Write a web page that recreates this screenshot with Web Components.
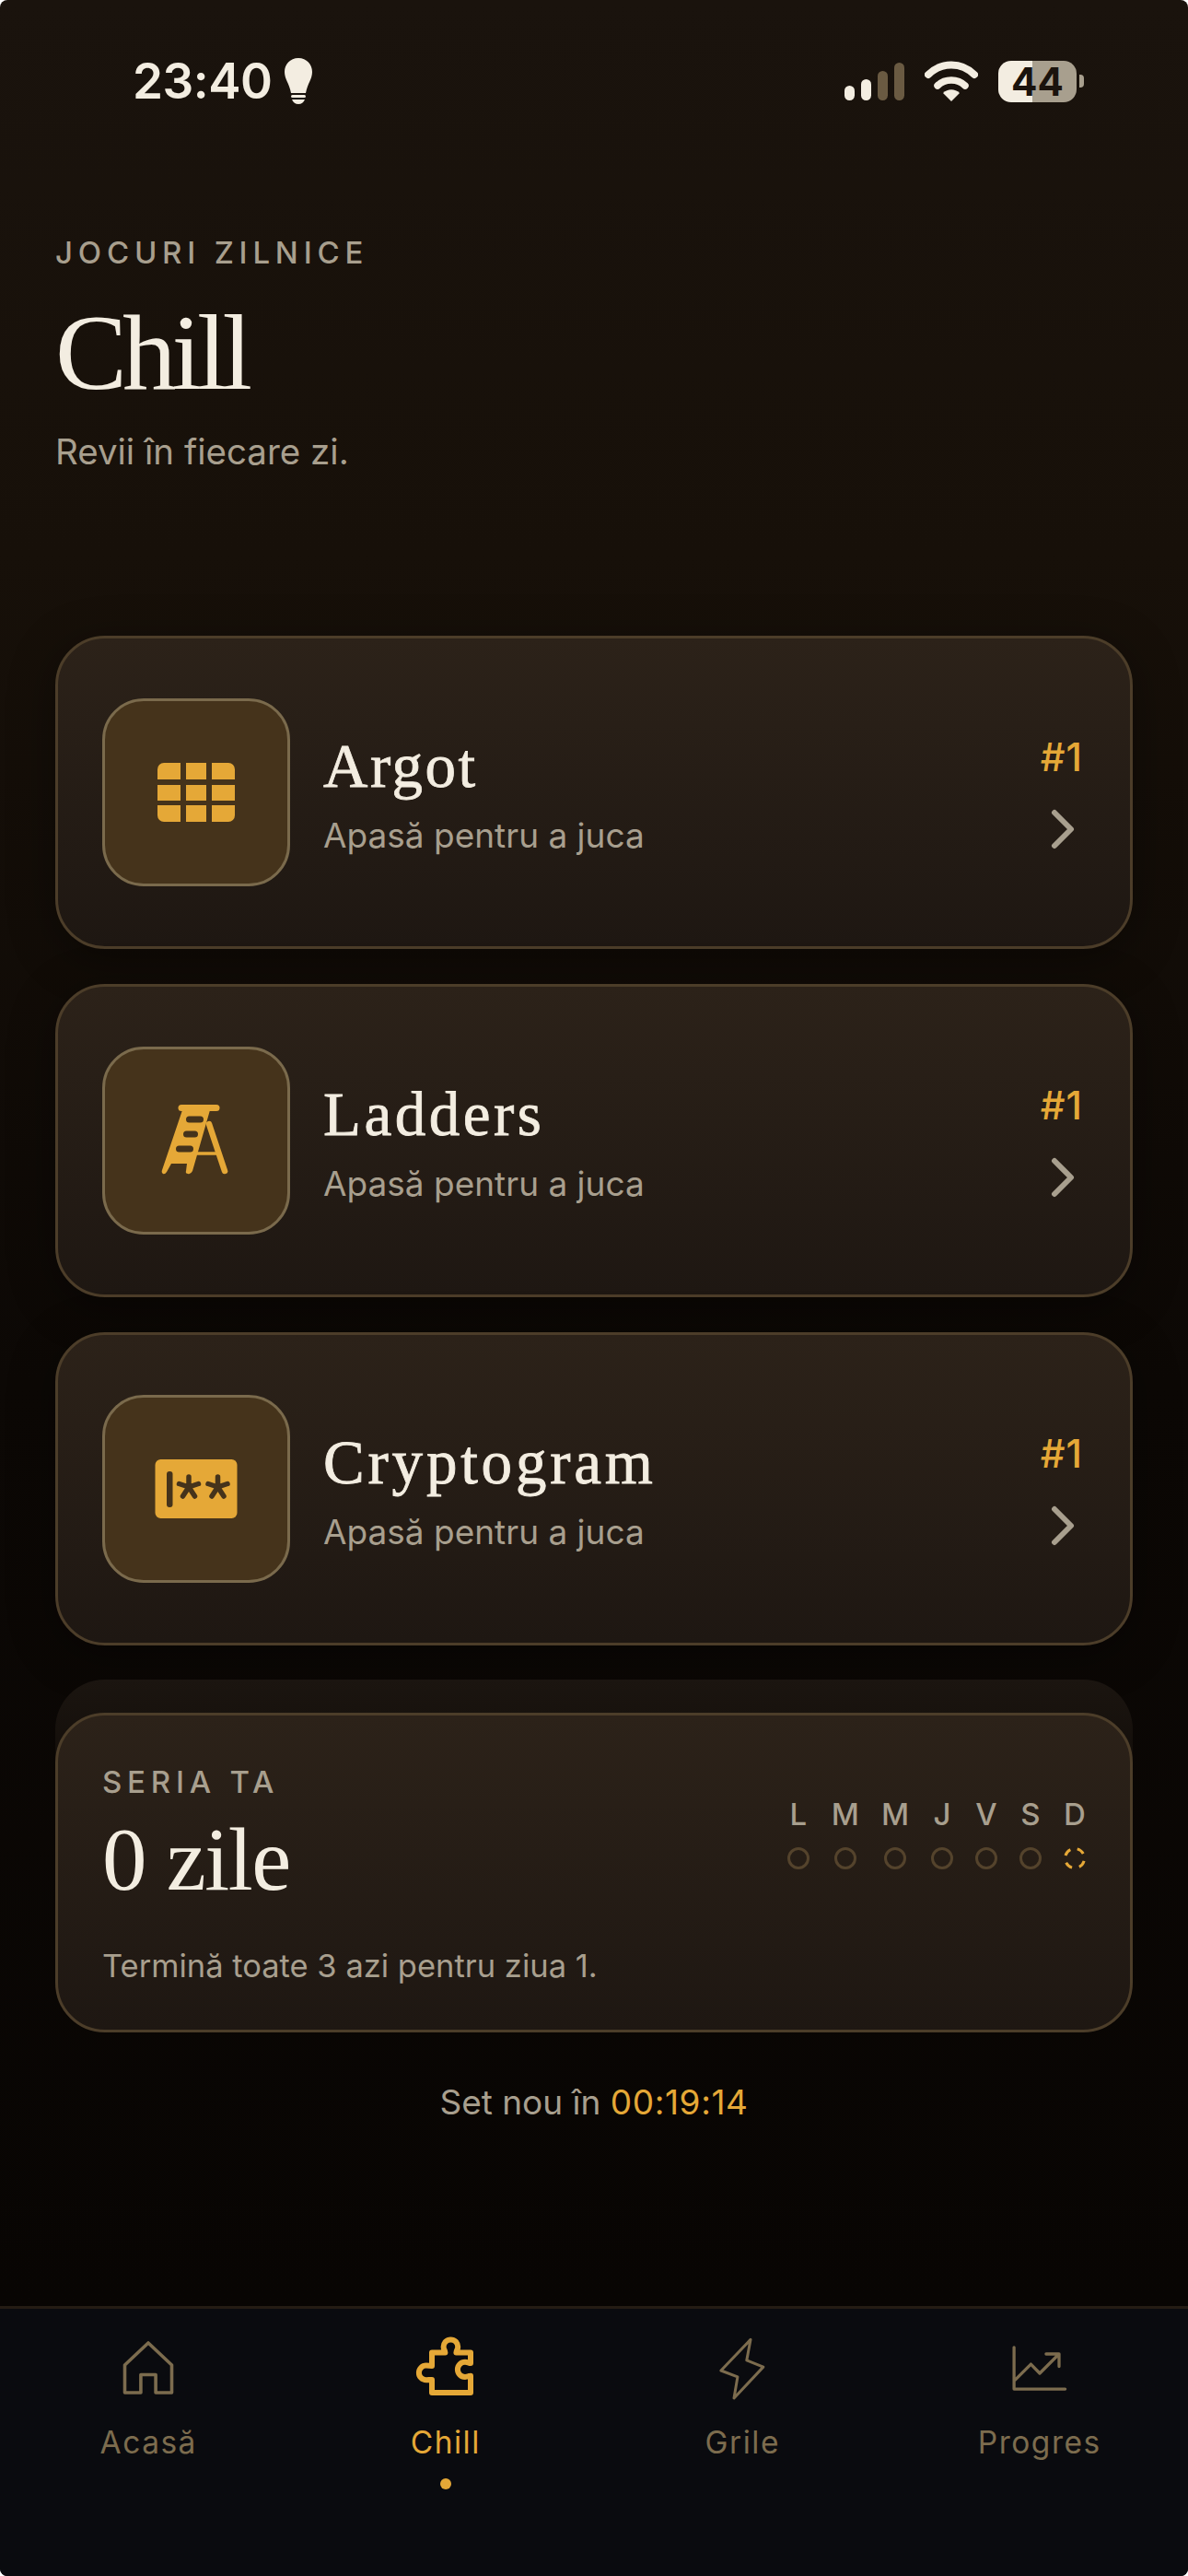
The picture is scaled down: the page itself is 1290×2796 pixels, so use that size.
<!DOCTYPE html>
<html lang="ro">
<head>
<meta charset="utf-8">
<title>Chill</title>
<style>
  html, body { margin: 0; background: #fff; }
  body { font-family: Inter, "Liberation Sans", sans-serif; }
</style>
</head>
<body>
<chill-app>
  <status-bar></status-bar>
  <page-header></page-header>
  <game-list>
    <game-card>
      <svg slot="icon" width="90" height="90" viewBox="0 0 90 90" fill="#e5a837">
        <clipPath id="grid-corners"><rect x="3" y="13" width="84" height="64" rx="7"/></clipPath>
        <g clip-path="url(#grid-corners)">
          <rect x="3" y="13" width="25" height="18"/><rect x="34" y="13" width="22" height="18"/><rect x="62" y="13" width="25" height="18"/>
          <rect x="3" y="37" width="25" height="17"/><rect x="34" y="37" width="22" height="17"/><rect x="62" y="37" width="25" height="17"/>
          <rect x="3" y="59" width="25" height="18"/><rect x="34" y="59" width="22" height="18"/><rect x="62" y="59" width="25" height="18"/>
        </g>
      </svg>
      <span slot="title" style="letter-spacing: 2.5px">Argot</span>
    </game-card>
    <game-card>
      <svg slot="icon" width="90" height="90" viewBox="0 3 90 90" fill="#e5a837">
        <rect x="25.5" y="9" width="45" height="7" rx="3.5"/>
        <path d="M30 15 H60 L41 81 Q39 85 36 84 Q33 84 34 81 L35 73 H18 L13 82 Q11 85 9 84 Q7 83 8 80 Z"/>
        <path d="M59 30 L76 81" stroke="#e5a837" stroke-width="6.5" stroke-linecap="round" fill="none"/>
        <path d="M44 62 H70" stroke="#e5a837" stroke-width="3.5" fill="none"/>
        <g fill="#45331b">
          <rect x="34" y="21.5" width="19" height="7" rx="3.5"/>
          <rect x="31" y="37.5" width="16" height="7" rx="3.5"/>
          <rect x="23" y="53.5" width="19" height="7" rx="3.5"/>
        </g>
      </svg>
      <span slot="title">Ladders</span>
    </game-card>
    <game-card>
      <svg slot="icon" width="90" height="90" viewBox="0 0 90 90">
        <rect x="0.5" y="13" width="89" height="64" rx="6" fill="#e5a837"/>
        <rect x="13" y="26" width="6.5" height="39" rx="3" fill="#45331b"/>
        <g stroke="#45331b" stroke-width="5.5" stroke-linecap="round">
          <path d="M37 32 V43 M37 43 L47.5 39.5 M37 43 L30.5 53 M37 43 L43.5 53 M37 43 L26.5 39.5"/>
          <path d="M68.5 32 V43 M68.5 43 L79 39.5 M68.5 43 L62 53 M68.5 43 L75 53 M68.5 43 L58 39.5"/>
        </g>
      </svg>
      <span slot="title" style="letter-spacing: 3.8px">Cryptogram</span>
    </game-card>
  </game-list>
  <streak-card></streak-card>
  <reset-timer></reset-timer>
  <tab-bar>
    <tab-item label="Acasă">
      <svg width="72" height="72" viewBox="0 0 24 24" fill="none" stroke="currentColor" stroke-width="1.2" stroke-linejoin="round"><path d="M12 3 L3.500 11 V21 H9.300 V14.500 H14.700 V21 H20.500 V11 Z"/></svg>
    </tab-item>
    <tab-item label="Chill" active>
      <svg width="72" height="72" viewBox="0 0 24 24" fill="none" stroke="currentColor" stroke-width="2" stroke-linejoin="round"><path d="M7 6.500 H11.800 C11.800 5.600 11.200 5.400 11.200 4.400 A2.600 2.600 0 0 1 16.400 4.400 C16.400 5.400 15.800 5.600 15.800 6.500 H21 V10.300 C20.200 10.300 20 9.900 19 9.900 A2.700 2.700 0 0 0 19 15.300 C20 15.300 20.200 14.900 21 14.900 V21 H7 V16.300 C6.200 16.300 5.800 16.400 4.900 16.400 A2.600 2.600 0 0 1 4.900 11.200 C5.800 11.200 6.200 11.300 7 11.300 Z"/></svg>
    </tab-item>
    <tab-item label="Grile">
      <svg width="72" height="72" viewBox="0 0 24 24" fill="none" stroke="currentColor" stroke-width="1" stroke-linejoin="round"><path d="M15 1.800 L13.600 9.300 L19.600 11.700 L9 23 L10.300 15.300 L4.300 13 Z"/></svg>
    </tab-item>
    <tab-item label="Progres">
      <svg width="72" height="72" viewBox="0 0 24 24" fill="none" stroke="currentColor" stroke-width="1.100" stroke-linecap="round" stroke-linejoin="round"><path d="M2.700 4.600 V19.700 H21.200 M3.200 16.300 L8.800 10.700 L12 14 L19 7 M14.300 7 H19 V11.500"/></svg>
    </tab-item>
  </tab-bar>
</chill-app>

<script>
  const amber = '#e5a837';
  const cream = '#f3ede1';
  const muted = '#a89f8e';

  class ChillApp extends HTMLElement {
    connectedCallback() {
      this.attachShadow({ mode: 'open' }).innerHTML = `
        <style>
          :host {
            display: flex;
            flex-direction: column;
            height: 2796px;
            box-sizing: border-box;
            border-radius: 8px;
            overflow: hidden;
            background: linear-gradient(#1a130d 0, #171009 600px, #0c0805 1500px, #080503 2500px);
          }
        </style>
        <slot></slot>`;
    }
  }

  class StatusBar extends HTMLElement {
    connectedCallback() {
      this.attachShadow({ mode: 'open' }).innerHTML = `
        <style>
          :host { display: flex; align-items: center; height: 176px; padding: 0 113px 0 144px; color: ${cream}; }
          .time { font-size: 53px; font-weight: 600; line-height: 176px; letter-spacing: -.5px; }
          .bulb { margin: 0 0 0 14px; }
          .right { margin-left: auto; display: flex; align-items: center; gap: 22px; }
          .bars { display: flex; align-items: flex-end; gap: 7px; height: 41px; }
          .bars i { width: 11px; border-radius: 6px; background: ${cream}; }
          .bars i.off { background: #6a5a42; }
          .battery { width: 85px; height: 45px; border-radius: 14px;
            background: linear-gradient(90deg, ${cream} 37px, ${muted} 37px);
            font: 700 42px/45px Inter, sans-serif; color: #1a130d; text-align: center; }
          .nub { width: 5px; height: 14px; margin-left: -19px; border-radius: 0 4px 4px 0; background: ${muted}; }
        </style>
        <span class="time">23:40</span>
        <svg class="bulb" width="30" height="50" viewBox="0 0 30 50" fill="${cream}">
          <path d="M15 0 C6 0 0 7 0 15 C0 23 5 27 7 38 H23 C25 27 30 23 30 15 C30 7 24 0 15 0 Z"/>
          <rect x="7" y="40" width="16" height="3" rx="1.500"/>
          <path d="M8 45 H22 Q20 50 15 50 Q10 50 8 45 Z"/>
        </svg>
        <div class="right">
          <div class="bars"><i style="height:16px"></i><i style="height:23px"></i><i class="off" style="height:32px"></i><i class="off" style="height:41px"></i></div>
          <svg width="58" height="44" viewBox="0 0 58 44" fill="none" stroke="${cream}" stroke-linecap="round">
            <path d="M4 15 C18 1 40 1 54 15" stroke-width="8"/>
            <path d="M14 27 C22 19 36 19 44 27" stroke-width="7.500"/>
            <path d="M29 44 L20 35 C25 30 33 30 38 35 Z" fill="${cream}" stroke="none"/>
          </svg>
          <div class="battery">44</div>
          <div class="nub"></div>
        </div>`;
    }
  }

  class PageHeader extends HTMLElement {
    connectedCallback() {
      this.attachShadow({ mode: 'open' }).innerHTML = `
        <style>
          :host { display: block; padding: 78px 60px 0; height: 514px; box-sizing: border-box; }
          .eyebrow { font-size: 33px; font-weight: 500; letter-spacing: 5.800px; color: ${muted}; line-height: 40px; }
          h1 { margin: 29px 0 0; font: 400 117px/120px "Liberation Serif", serif; letter-spacing: -5px; color: ${cream}; }
          p { margin: 24px 0 0; font-size: 38.500px; line-height: 46px; color: ${muted}; }
        </style>
        <div class="eyebrow">JOCURI ZILNICE</div>
        <h1>Chill</h1>
        <p>Revii în fiecare zi.</p>`;
    }
  }

  class GameList extends HTMLElement {
    connectedCallback() {
      this.attachShadow({ mode: 'open' }).innerHTML = `
        <style>:host { display: flex; flex-direction: column; gap: 38px; padding: 0 60px; }</style>
        <slot></slot>`;
    }
  }

  class GameCard extends HTMLElement {
    connectedCallback() {
      this.attachShadow({ mode: 'open' }).innerHTML = `
        <style>
          :host {
            display: flex; align-items: center; height: 340px; box-sizing: border-box;
            padding: 0 51px 0 51px;
            border-radius: 54px;
            border: 3px solid #4c3d29;
            background: linear-gradient(#2c2219, #1e1712);
            box-shadow: 0 10px 50px rgba(0,0,0,.35);
          }
          .tile { flex: none; width: 204px; height: 204px; box-sizing: border-box; margin-left: -3px;
            display: flex; align-items: center; justify-content: center;
            border: 3px solid #7a6a4c; border-radius: 45px; background: #45331b; }
          .text { margin-left: 36px; flex: 1; }
          .title { font: 400 67px/78px "Liberation Serif", serif; letter-spacing: 3.500px; -webkit-text-stroke: .8px ${cream}; color: ${cream}; }
          .sub { margin-top: 15px; font-size: 37px; line-height: 44px; color: ${muted}; }
          .side { display: flex; flex-direction: column; align-items: flex-end; gap: 32px; }
          .rank { font-size: 42px; line-height: 48px; font-weight: 500; letter-spacing: 1px; color: ${amber}; }
          svg { display: block; margin-right: 7px; }
        </style>
        <div class="tile"><slot name="icon"></slot></div>
        <div class="text">
          <div class="title"><slot name="title"></slot></div>
          <div class="sub">Apasă pentru a juca</div>
        </div>
        <div class="side">
          <div class="rank">#1</div>
          <svg width="28" height="44" viewBox="0 0 28 44" fill="none" stroke="${muted}" stroke-width="6" stroke-linecap="round" stroke-linejoin="round"><path d="M4 4 L22 22 L4 40"/></svg>
        </div>`;
    }
  }

  class StreakCard extends HTMLElement {
    connectedCallback() {
      const days = ['L', 'M', 'M', 'J', 'V', 'S', 'D'];
      const cols = days.map((d, i) => `
        <div class="day"><span>${d}</span>${i === 6
          ? `<svg width="24" height="24" viewBox="0 0 24 24"><circle cx="12" cy="12" r="10.500" fill="none" stroke="${amber}" stroke-width="3" stroke-dasharray="8.500 8" transform="rotate(-75 12 12)"/></svg>`
          : '<b></b>'}</div>`).join('');
      this.attachShadow({ mode: 'open' }).innerHTML = `
        <style>
          :host { display: block; margin: 37px 60px 0; padding-top: 36px; border-radius: 54px;
            background: linear-gradient(#1b1510, #110c08 120px); }
          .card { height: 347px; box-sizing: border-box; padding: 52px 48px 0 48px;
            border: 3px solid #4c3d29; border-radius: 54px;
            background: linear-gradient(#2c2219, #1e1712); }
          .top { display: flex; justify-content: space-between; }
          .eyebrow { font-size: 33px; font-weight: 500; line-height: 40px; letter-spacing: 5.800px; color: ${muted}; }
          .count { margin-top: 15px; font: 400 97px/100px "Liberation Serif", serif; letter-spacing: -1.500px; color: ${cream}; }
          .note { margin-top: 43px; font-size: 34.500px; line-height: 44px; color: ${muted}; }
          .week { display: flex; gap: 24px; margin: 39px 0 0 1px; }
          .day { display: flex; flex-direction: column; align-items: center; gap: 20px; min-width: 24px;
            font-size: 33px; font-weight: 500; line-height: 32px; color: ${muted}; }
          .day b { display: block; width: 24px; height: 24px; box-sizing: border-box; border: 3px solid #54432c; border-radius: 50%; }
          .day svg { display: block; }
        </style>
        <div class="card">
          <div class="top">
            <div>
              <div class="eyebrow">SERIA TA</div>
              <div class="count">0 zile</div>
            </div>
            <div class="week">${cols}</div>
          </div>
          <div class="note">Termină toate 3 azi pentru ziua 1.</div>
        </div>`;
    }
  }

  class ResetTimer extends HTMLElement {
    connectedCallback() {
      this.attachShadow({ mode: 'open' }).innerHTML = `
        <style>
          :host { display: block; margin-top: 53px; text-align: center; font-size: 37px; line-height: 46px; color: ${muted}; }
          span { color: ${amber}; letter-spacing: .6px; }
        </style>
        Set nou în <span>00:19:14</span>`;
    }
  }

  class TabBar extends HTMLElement {
    connectedCallback() {
      this.attachShadow({ mode: 'open' }).innerHTML = `
        <style>
          :host { display: grid; grid-template-columns: repeat(4, 1fr); margin-top: auto; height: 293px; box-sizing: border-box;
            padding-top: 28px; border-top: 3px solid #241c14; background: #0a0b0f; }
        </style>
        <slot></slot>`;
    }
  }

  class TabItem extends HTMLElement {
    connectedCallback() {
      const active = this.hasAttribute('active');
      this.attachShadow({ mode: 'open' }).innerHTML = `
        <style>
          :host { display: flex; flex-direction: column; align-items: center; color: ${active ? amber : '#7c6c4e'}; }
          .icon { height: 72px; }
          .label { margin-top: 25px; font-size: 33.500px; line-height: 40px; letter-spacing: 1.500px; }
          .dot { width: 12px; height: 12px; margin-top: 19px; border-radius: 50%; background: ${amber}; }
        </style>
        <div class="icon"><slot></slot></div>
        <div class="label">${this.getAttribute('label')}</div>
        ${active ? '<div class="dot"></div>' : ''}`;
    }
  }

  customElements.define('chill-app', ChillApp);
  customElements.define('status-bar', StatusBar);
  customElements.define('page-header', PageHeader);
  customElements.define('game-list', GameList);
  customElements.define('game-card', GameCard);
  customElements.define('streak-card', StreakCard);
  customElements.define('reset-timer', ResetTimer);
  customElements.define('tab-bar', TabBar);
  customElements.define('tab-item', TabItem);
</script>
</body>
</html>
